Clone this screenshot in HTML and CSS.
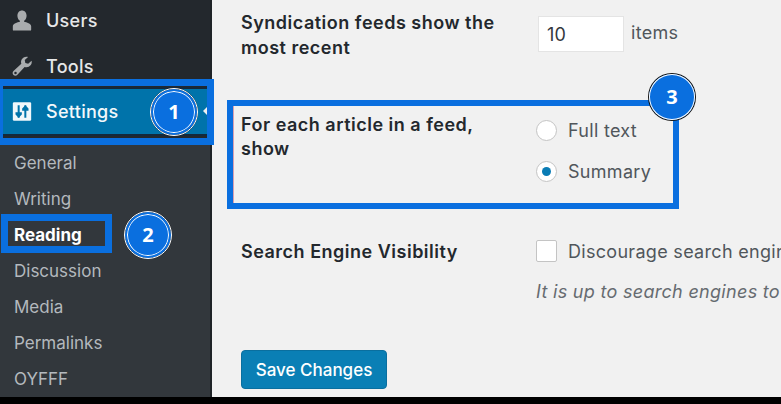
FILE: index.html
```html
<!DOCTYPE html>
<html lang="en">
<head>
<meta charset="utf-8">
<title>Reading Settings</title>
<link rel="stylesheet" href="styles.css">
</head>
<body>
<div class="screen">
  <aside class="sidebar">
    <nav class="menu">
      <a class="menu-item item-users">
        <svg class="menu-icon" viewBox="0 0 24 24"><path d="M12 0c3.300 0 5.500 2.700 5.500 6.300 0 2.700-1.200 5-3 6.100v1.100c3 .8 8.500 2.200 8.500 5.500V23a1 1 0 0 1-1 1H2a1 1 0 0 1-1-1v-4c0-3.300 5.500-4.700 8.500-5.500v-1.100c-1.800-1.100-3-3.400-3-6.100C6.500 2.700 8.700 0 12 0z"/></svg>
        <span>Users</span>
      </a>
      <a class="menu-item item-tools">
        <svg class="menu-icon" viewBox="0 0 24 24"><path fill-rule="evenodd" d="M23.500 5c.8 3-.6 6-3.400 7.300-1.700.8-3.400.7-5 .2L6.500 22c-1.300 1.400-3.300 1.500-4.700.2-1.400-1.300-1.400-3.400 0-4.800l9.400-8.700c-.6-1.700-.5-3.500.4-5C13 1 16.200-.3 19.300.6l-4 3.700.7 3.400 3.400.9zM4.200 18.300a1.500 1.500 0 1 0 0 3 1.500 1.500 0 0 0 0-3z"/></svg>
        <span>Tools</span>
      </a>
      <a class="menu-item item-settings">
        <svg class="menu-icon settings-icon" viewBox="0 0 24 24"><rect x="1" y="1" width="22" height="22" rx="1.500" fill="#f0f7fb"/><path d="M8 4.500v15M16 4.500v15" stroke="#0073aa" stroke-width="2.400" fill="none"/><path d="M4.200 13h7.600v2.500L8 19.500l-3.800-4zM12.200 11h7.600V8.500L16 4.500l-3.800 4z" fill="#0073aa"/></svg>
        <span>Settings</span>
        <i class="caret"></i>
      </a>
    </nav>
    <ul class="submenu">
      <li>General</li>
      <li>Writing</li>
      <li class="current">Reading</li>
      <li>Discussion</li>
      <li>Media</li>
      <li>Permalinks</li>
      <li>OYFFF</li>
    </ul>
  </aside>
  <main class="content">
    <div class="row row-feeds">
      <div class="label">Syndication feeds show the most recent</div>
      <div class="field inline">
        <span class="number">10</span>
        <span class="text">items</span>
      </div>
    </div>
    <div class="row row-article">
      <div class="label">For each article in a feed, show</div>
      <div class="field radios">
        <div class="option"><span class="radio"></span><span class="text">Full text</span></div>
        <div class="option"><span class="radio checked"></span><span class="text">Summary</span></div>
      </div>
    </div>
    <div class="row row-search">
      <div class="label">Search Engine Visibility</div>
      <div class="field">
        <div class="option"><span class="checkbox"></span><span class="text">Discourage search engines from indexing this site</span></div>
        <p class="note">It is up to search engines to honor this request.</p>
      </div>
    </div>
    <button class="save" type="button">Save Changes</button>
  </main>
  <div class="footer-bar"></div>

  <div class="box box-settings"></div>
  <div class="box box-reading"></div>
  <div class="box box-article"></div>
  <div class="badge badge-1">1</div>
  <div class="badge badge-2">2</div>
  <div class="badge badge-3">3</div>
</div>
</body>
</html>
```
FILE: styles.css
```css
* { box-sizing: border-box; }
html, body { margin: 0; height: 100%; overflow: hidden; background: #000; }
body { font-family: Inter, "Liberation Sans", sans-serif; }
.screen { position: relative; width: 781px; height: 404px; overflow: hidden; display: grid; grid-template-columns: 212px 1fr; grid-template-rows: 397px 7px; background: #f1f1f1; }

.sidebar { display: flex; flex-direction: column; background: #32373c; border-right: 2px solid #1f2327; }
.menu { background: #23282d; height: 142px; }
.menu-item { display: flex; align-items: center; gap: 14px; padding-left: 12px; color: #e6e7e8; font-size: 18px; font-weight: 500; letter-spacing: .3px; position: relative; }
.item-users { height: 40px; }
.item-tools { height: 49px; padding-top: 3px; }
.item-settings { height: 45px; background: #0073aa; color: #f2f8fb; box-shadow: 0 -2px 0 #14293c, 0 2px 0 #14293c; }
.menu-icon { width: 20px; height: 21px; fill: #a9acae; flex: none; }
.caret { position: absolute; right: 0; top: 15px; width: 0; height: 0; border: 7px solid transparent; border-left: 0; border-right: 7px solid #f1f1f1; }

.submenu { list-style: none; margin: 0; padding: 3px 0 0 14px; font-size: 17px; color: #b4b9be; }
.submenu li { height: 36px; line-height: 36px; }
.submenu .current { color: #fff; font-weight: 700; }

.content { padding: 0 0 0 29px; color: #23282d; overflow: hidden; font-size: 18px; letter-spacing: .3px; }
.row { display: grid; grid-template-columns: 295px 400px; }
.label { font-weight: 600; font-size: 18px; letter-spacing: .5px; line-height: 25px; color: #23282d; width: 265px; }
.text { color: #50565b; white-space: nowrap; }
.row-feeds { padding-top: 10px; height: 101px; }
.inline { display: flex; align-items: flex-start; gap: 7px; margin-left: 2px; }
.number { display: block; width: 86px; height: 36px; margin-top: 6px; background: #fff; border: 1px solid #e4e4e4; padding-left: 8px; line-height: 36px; color: #33383d; }
.inline .text { margin-top: 12px; }
.row-article { height: 139px; padding-top: 5px; }
.row-article .label { width: 240px; padding-top: 7px; line-height: 24px; }
.radios { display: flex; flex-direction: column; gap: 19px; padding-top: 13px; }
.option { display: flex; align-items: center; gap: 11px; height: 22px; }
.radio { width: 21px; height: 21px; border-radius: 50%; background: #fff; border: 1px solid #c4c4c4; flex: none; position: relative; }
.radio.checked::after { content: ""; position: absolute; left: 5px; top: 5px; width: 9px; height: 9px; border-radius: 50%; background: #0a7cb5; }
.row-search { height: 110px; }
.row-search .label { white-space: nowrap; width: auto; margin-top: -1px; }
.checkbox { width: 21px; height: 22px; background: #fff; border: 1px solid #c4c4c4; border-radius: 2px; flex: none; }
.note { margin: 17px 0 0; font-style: italic; color: #666b70; white-space: nowrap; line-height: 25px; }
.save { display: block; width: 146px; height: 39px; padding: 0; background: #0a7fb5; color: #fff; border: 1px solid #0a6f9f; border-radius: 4px; font: 500 17px Inter, "Liberation Sans", sans-serif; }

.footer-bar { grid-column: 1 / -1; background: #000; }

.box { position: absolute; border: 6px solid #0a6fdf; }
.box-settings { left: 0; top: 79px; width: 214px; height: 66px; border-width: 7px; border-left-width: 3px; }
.box-reading { left: 1px; top: 214px; width: 111px; height: 39px; border-width: 7px; }
.box-article { left: 227px; top: 100px; width: 452px; height: 109px; box-shadow: inset 1px 0 0 #d9a0b0; }
.badge { position: absolute; width: 46px; height: 46px; border-radius: 50%; background: #0a6fdf; color: #fff; font: 700 20px/42px "Open Sans", sans-serif; text-align: center; border: 2px solid #0a6fdf; box-shadow: 0 0 0 1px #111, inset 0 0 0 1px #fff; }
.badge-1 { left: 151px; top: 89px; outline: 1px solid #fff; }
.badge-2 { left: 125px; top: 212px; outline: 1px solid #fff; }
.badge-3 { left: 649px; top: 74px; border: 0; line-height: 46px; }
```
